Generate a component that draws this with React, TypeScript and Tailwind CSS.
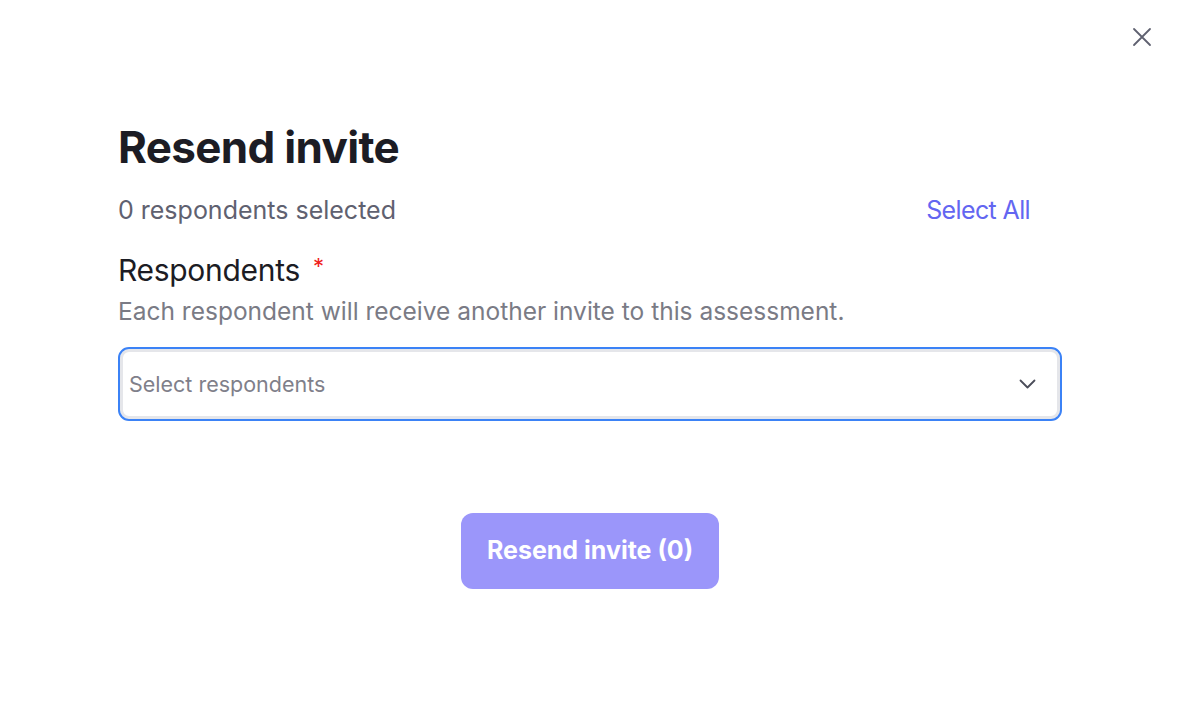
import React from "react";

function CloseIcon() {
  return (
    <svg width="20" height="20" viewBox="0 0 20 20" fill="none" stroke="#5f6170" strokeWidth="1.8" strokeLinecap="round">
      <path d="M2 2l16 16M18 2L2 18" />
    </svg>
  );
}

function Chevron() {
  return (
    <svg width="17" height="10" viewBox="0 0 17 10" fill="none" stroke="#4b4d5a" strokeWidth="1.8" strokeLinecap="round" strokeLinejoin="round">
      <path d="M1.5 1.5l7 7 7-7" />
    </svg>
  );
}

export default function App() {
  return (
    <div
      className="relative w-full h-[704px] bg-white"
      style={{ fontFamily: "Inter, 'Noto Sans', sans-serif" }}
    >
      <button className="absolute top-[27px] right-[30px] p-0">
        <CloseIcon />
      </button>

      <div className="flex flex-col pl-[118px] pr-[120px] pt-[121px]">
        <h1 className="text-[44px] leading-[52px] font-bold tracking-[-0.015em] text-[#1c1c24]">
          Resend invite
        </h1>

        <div className="flex items-center justify-between mt-[19px] pr-[32px]">
          <span className="text-[25px] leading-[36px] text-[#5f6170]">
            0 respondents selected
          </span>
          <span className="text-[25px] leading-[36px] tracking-[-0.025em] text-[#6366f1]">
            Select All
          </span>
        </div>

        <div className="flex items-start mt-[24px]">
          <span className="text-[30px] leading-[36px] tracking-[-0.01em] text-[#1c1c24]">
            Respondents
          </span>
          <span className="ml-[13px] text-[22px] leading-[28px] text-[#ef2020]">*</span>
        </div>
        <p className="text-[24.5px] leading-[36px] text-[#7a7b85] mt-[5px]">
          Each respondent will receive another invite to this assessment.
        </p>

        <div className="mt-[18px] flex items-center justify-between h-[74px] rounded-[11px] border-2 border-[#3b82f6] bg-white pl-[9px] pr-[24px] shadow-[inset_0_0_0_3px_#e5e6ea]">
          <span className="text-[21.5px] text-[#7f808a]">Select respondents</span>
          <Chevron />
        </div>

        <div className="flex justify-center mt-[92px]">
          <button className="w-[258px] h-[76px] rounded-[12px] bg-[#9b96fa] text-white text-[25px] font-bold">
            Resend invite (0)
          </button>
        </div>
      </div>
    </div>
  );
}
